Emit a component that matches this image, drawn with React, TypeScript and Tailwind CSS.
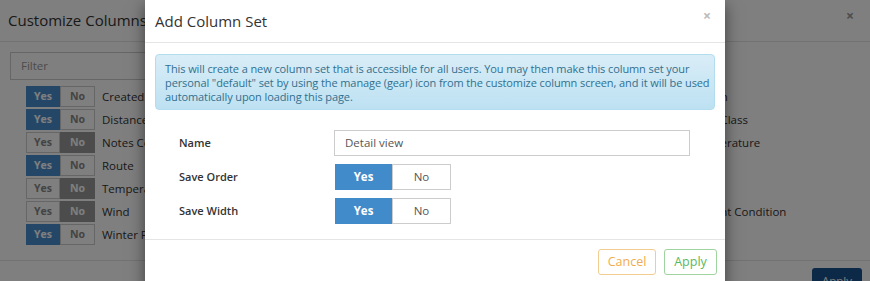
const leftRows = [
  { label: 'Created', on: true },
  { label: 'Distance', on: true },
  { label: 'Notes Comments', on: false },
  { label: 'Route', on: true },
  { label: 'Temperature', on: false },
  { label: 'Wind', on: false },
  { label: 'Winter Plan', on: true },
];

const rightRows = ['Station', 'Road Class', 'Temperature', '', '', 'Current Condition', ''];

const SmallToggle = ({ on }: { on: boolean }) => (
  <div className="flex h-[21px] w-[69px] text-[10.5px] font-bold">
    <span
      className={
        on
          ? 'flex w-[34px] items-center justify-center bg-[#4a8fcf] text-white'
          : 'flex w-[34px] items-center justify-center border border-[#ccc] bg-white text-[#888]'
      }
    >
      Yes
    </span>
    <span
      className={
        on
          ? 'flex w-[35px] items-center justify-center border border-[#ccc] bg-white text-[#888]'
          : 'flex w-[35px] items-center justify-center bg-[#999] text-white'
      }
    >
      No
    </span>
  </div>
);

const YesNo = () => (
  <div className="flex h-[26px] w-[116px] text-[11.5px]">
    <span className="flex w-[57px] items-center justify-center bg-[#428bca] font-bold text-white">Yes</span>
    <span className="flex flex-1 items-center justify-center border border-[#ccc] bg-white text-[#555]">No</span>
  </div>
);

const App = () => {
  return (
    <div className="relative h-[281px] w-[870px] overflow-hidden bg-white font-['Open_Sans',sans-serif] text-[11.5px] text-[#333]">
      {/* page behind: Customize Columns */}
      <div className="flex h-[42px] items-center justify-between border-b border-[#e5e5e5] pl-[8px] pr-[16px]">
        <h2 className="text-[15px] text-[#333]">Customize Columns</h2>
        <span className="-mt-[10px] text-[14px] font-bold text-[#999]">×</span>
      </div>
      <div className="px-[10px] pt-[10px]">
        <div className="flex h-[28px] w-[400px] items-center border border-[#ccc] px-[10px] text-[#999]">Filter</div>
        <div className="mt-[6px] grid grid-cols-[664px_1fr] pl-[16px]">
          <div className="flex flex-col gap-[2px]">
            {leftRows.map((r) => (
              <div key={r.label} className="flex h-[21px] items-center gap-[7px]">
                <SmallToggle on={r.on} />
                <span>{r.label}</span>
              </div>
            ))}
          </div>
          <div className="flex flex-col gap-[2px]">
            {rightRows.map((r, i) => (
              <div key={i} className="flex h-[21px] items-center">
                <span>{r}</span>
              </div>
            ))}
          </div>
        </div>
      </div>
      <div className="mt-[15px] flex justify-end border-t border-[#e5e5e5] px-[8px] pt-[7px]">
        <span className="rounded-[3px] bg-[#1a5290] px-[10px] py-[4px] text-white">Apply</span>
      </div>

      {/* backdrop */}
      <div className="absolute inset-0 bg-black/50" />

      {/* Add Column Set dialog */}
      <div className="absolute left-[145px] top-0 w-[580px] bg-white shadow-[0_5px_15px_rgba(0,0,0,0.5)]">
        <div className="flex h-[43px] items-center justify-between border-b border-[#e5e5e5] pl-[10px] pr-[14px]">
          <h4 className="text-[15px] text-[#333]">Add Column Set</h4>
          <span className="-mt-[12px] text-[14px] font-bold text-[#bbb]">×</span>
        </div>
        <div className="px-[10px] pt-[11px]">
          <div className="whitespace-nowrap rounded-[4px] border border-[#b3dcee] bg-linear-to-b from-[#d9edf7] to-[#bde1f2] px-[9px] pb-[5px] pt-[7px] text-[11px] leading-[14px] tracking-[-0.1px] text-[#31708f]">
            This will create a new column set that is accessible for all users. You may then make this column set your
            <br />
            personal "default" set by using the manage (gear) icon from the customize column screen, and it will be used
            <br />
            automatically upon loading this page.
          </div>
          <div className="mt-[20px] flex flex-col gap-[8px] pb-[15px]">
            <div className="grid grid-cols-[155px_356px] items-center pl-[24px]">
              <span className="text-[11px] font-semibold">Name</span>
              <div className="flex h-[26px] items-center border border-[#ccc] px-[10px] text-[#555]">Detail view</div>
            </div>
            <div className="grid grid-cols-[156px_356px] items-center pl-[24px]">
              <span className="text-[11px] font-semibold">Save Order</span>
              <YesNo />
            </div>
            <div className="grid grid-cols-[156px_356px] items-center pl-[24px]">
              <span className="text-[11px] font-semibold">Save Width</span>
              <YesNo />
            </div>
          </div>
        </div>
        <div className="flex justify-end gap-[8px] border-t border-[#e5e5e5] pb-[15px] pr-[8px] pt-[9px]">
          <span className="flex h-[26px] w-[58px] items-center justify-center rounded-[3px] border border-[#f3cc92] text-[12.5px] text-[#f0ad4e]">
            Cancel
          </span>
          <span className="flex h-[26px] w-[53px] items-center justify-center rounded-[3px] border border-[#9fd39f] text-[12.5px] text-[#5cb85c]">
            Apply
          </span>
        </div>
      </div>
    </div>
  );
};

export default App;
